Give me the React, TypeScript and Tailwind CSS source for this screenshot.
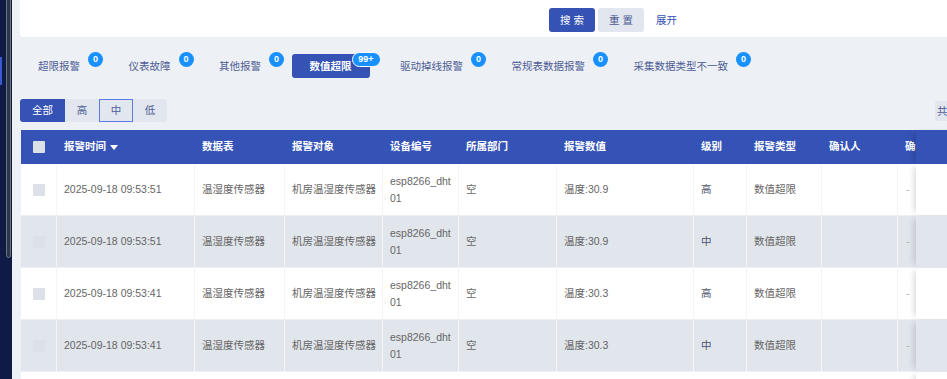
import React from "react";

const FONT = { fontFamily: '"Liberation Sans", "Noto Sans CJK SC", "Noto Sans", sans-serif' };

type Tab = { label: string; count: string; active?: boolean };
const tabs: Tab[] = [
  { label: "超限报警", count: "0" },
  { label: "仪表故障", count: "0" },
  { label: "其他报警", count: "0" },
  { label: "数值超限", count: "99+", active: true },
  { label: "驱动掉线报警", count: "0" },
  { label: "常规表数据报警", count: "0" },
  { label: "采集数据类型不一致", count: "0" },
];

const cols = [
  { key: "chk", w: "w-[36px]", label: "" },
  { key: "time", w: "w-[138px]", label: "报警时间" },
  { key: "table", w: "w-[90px]", label: "数据表" },
  { key: "obj", w: "w-[98px]", label: "报警对象" },
  { key: "dev", w: "w-[76px]", label: "设备编号" },
  { key: "dept", w: "w-[98px]", label: "所属部门" },
  { key: "val", w: "w-[137px]", label: "报警数值" },
  { key: "lvl", w: "w-[53px]", label: "级别" },
  { key: "type", w: "w-[75px]", label: "报警类型" },
  { key: "who", w: "w-[76px]", label: "确认人" },
  { key: "when", w: "w-[18px]", label: "确认时间" },
];

const rows = [
  { time: "2025-09-18 09:53:51", val: "温度:30.9", lvl: "高" },
  { time: "2025-09-18 09:53:51", val: "温度:30.9", lvl: "中" },
  { time: "2025-09-18 09:53:41", val: "温度:30.3", lvl: "高" },
  { time: "2025-09-18 09:53:41", val: "温度:30.3", lvl: "中" },
];

function Check() {
  return <span className="block w-[12px] h-[12px] rounded-[1px] bg-[#dbe1e6]" />;
}

const cell = "shrink-0 flex items-center pl-[7px] border-r border-[#f4f5f8]";

export default function App() {
  return (
    <div style={FONT} className="w-[947px] h-[379px] overflow-hidden flex bg-[#edf0f4] text-[10.5px]">
      {/* sidebar */}
      <aside className="relative w-[12px] shrink-0 bg-[#0f1b46]">
        <span className="absolute left-0 top-[57px] w-[2px] h-[28px] bg-[#3a5bd0]" />
        <span className="absolute left-[6px] top-[-4px] w-[5px] h-[262px] rounded-b-[3px] border border-[#6b7282] bg-[#2e3649]" />
      </aside>

      <main className="flex-1 min-w-0 pl-[8px] flex flex-col">
        {/* search panel */}
        <div className="h-[37px] shrink-0 bg-white rounded-bl-[3px] flex items-start pt-[8px] pl-[529px]">
          <button className="h-[24px] w-[46px] rounded-[3px] bg-[#3552b5] text-white tracking-[3px] pl-[3px] leading-[24px]">搜索</button>
          <button className="ml-[3px] h-[24px] w-[46px] rounded-[3px] bg-[#e2e6ee] text-[#4e5d96] tracking-[3px] pl-[3px] leading-[24px]">重置</button>
          <button className="ml-[12px] h-[24px] text-[#3552b5] leading-[24px]">展开</button>
        </div>

        {/* tabs */}
        <div className="mt-[17px] flex gap-[12.5px] shrink-0">
          {tabs.map((t) => (
            <div
              key={t.label}
              className={
                "relative shrink-0 h-[24px] px-[18px] leading-[24px] rounded-[3px] whitespace-nowrap " +
                (t.active ? "bg-[#3552b5] text-white font-bold" : "text-[#4e5d96]")
              }
            >
              {t.label}
              {t.count === "99+" ? (
                <span className="absolute top-[-2px] right-[-11px] h-[15px] w-[29px] rounded-full bg-[#1890ff] border border-white text-white text-[9px] font-bold leading-[13px] text-center">
                  99+
                </span>
              ) : (
                <span className="absolute top-[-2px] right-[-5px] h-[15px] w-[15px] rounded-full bg-[#1890ff] text-white text-[9px] font-bold leading-[15px] text-center">
                  0
                </span>
              )}
            </div>
          ))}
        </div>

        {/* level segment */}
        <div className="mt-[21px] flex items-center shrink-0">
          <div className="shrink-0 flex h-[23px] rounded-[3px] overflow-hidden bg-[#e2e6ee]">
            <span className="shrink-0 w-[45px] text-center leading-[23px] bg-[#3552b5] text-white">全部</span>
            <span className="shrink-0 w-[34px] text-center leading-[21px] border border-transparent text-[#4e5d96]">高</span>
            <span className="shrink-0 w-[34px] text-center leading-[21px] border border-[#5a79e2] text-[#4e5d96]">中</span>
            <span className="shrink-0 w-[34px] text-center leading-[21px] border border-transparent text-[#4e5d96]">低</span>
          </div>
          <div className="ml-[768px] shrink-0 h-[20px] w-[80px] rounded-[3px] bg-[#e2e6ee] text-[#4e5d96] leading-[20px] pl-[2px] whitespace-nowrap">
            共 4 条
          </div>
        </div>

        {/* table */}
        <div className="mt-[8px] ml-[1px] flex flex-col">
          {/* header */}
          <div className="flex h-[34px] bg-[#3553b6] text-white font-bold">
            {cols.map((c) => (
              <div
                key={c.key}
                className={c.w + " shrink-0 h-full flex items-center overflow-hidden whitespace-nowrap " + (c.key === "chk" ? "justify-center" : "pl-[7px]")}
              >
                {c.key === "chk" ? (
                  <Check />
                ) : c.key === "time" ? (
                  <>
                    {c.label}
                    <svg width="8" height="5" viewBox="0 0 8 5" className="ml-[4px]">
                      <path d="M0 0h8L4 5z" fill="white" />
                    </svg>
                  </>
                ) : (
                  c.label
                )}
              </div>
            ))}
            <div className="w-[60px] shrink-0 h-full bg-[#3553b6] shadow-[-5px_0_6px_-3px_rgba(0,0,0,0.18)]" />
          </div>

          {rows.map((r, i) => {
            const bg = i % 2 === 1 ? "bg-[#e1e5ec]" : "bg-white";
            return (
              <div key={i} className={"flex h-[52px] border-b border-[#eceff3] text-[#666666] " + bg}>
                <div className="w-[36px] shrink-0 flex items-center justify-center border-r border-[#f4f5f8]">
                  <Check />
                </div>
                <div className={"w-[138px] whitespace-nowrap " + cell}>{r.time}</div>
                <div className={"w-[90px] whitespace-nowrap " + cell}>温湿度传感器</div>
                <div className={"w-[98px] whitespace-nowrap " + cell}>机房温湿度传感器</div>
                <div className={"w-[76px] leading-[17px] " + cell}>
                  <span>
                    esp8266_dht
                    <br />
                    01
                  </span>
                </div>
                <div className={"w-[98px] " + cell}>空</div>
                <div className={"w-[137px] whitespace-nowrap " + cell}>{r.val}</div>
                <div className={"w-[53px] text-[#4b5470] " + cell}>{r.lvl}</div>
                <div className={"w-[75px] whitespace-nowrap " + cell}>数值超限</div>
                <div className="w-[76px] shrink-0 border-r border-[#f4f5f8]" />
                <div className="w-[18px] shrink-0 flex items-center pl-[8px] text-[#b0b0b0]">-</div>
                <div className={"w-[60px] shrink-0 shadow-[-5px_0_6px_-3px_rgba(0,0,0,0.15)] " + bg} />
              </div>
            );
          })}
          {/* next row (white, below the fold) */}
          <div className="flex h-[52px] bg-white">
            <div className="w-[895px] shrink-0" />
            <div className="w-[60px] shrink-0 bg-white shadow-[-5px_0_6px_-3px_rgba(0,0,0,0.15)]" />
          </div>
        </div>
      </main>
    </div>
  );
}
